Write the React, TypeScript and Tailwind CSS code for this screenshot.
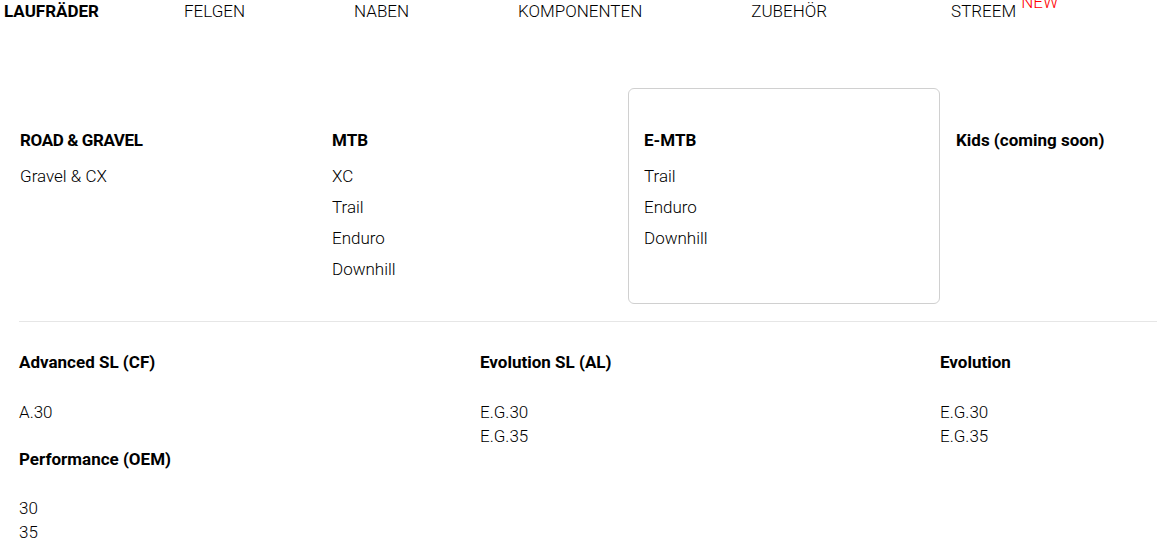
import React from "react";

const nav = [
  { label: "LAUFRÄDER", active: true, ml: "ml-[4px]" },
  { label: "FELGEN", ml: "ml-[85px]" },
  { label: "NABEN", ml: "ml-[109px]" },
  { label: "KOMPONENTEN", ml: "ml-[109px]" },
  { label: "ZUBEHÖR", ml: "ml-[109px]" },
  { label: "STREEM", ml: "ml-[124px]", isNew: true },
];

const cats = [
  { title: "ROAD & GRAVEL", items: ["Gravel & CX"], tight: true },
  { title: "MTB", items: ["XC", "Trail", "Enduro", "Downhill"] },
  { title: "E-MTB", items: ["Trail", "Enduro", "Downhill"], boxed: true },
  { title: "Kids (coming soon)", items: [] },
];

export default function App() {
  return (
    <div className="w-[1157px] h-[555px] bg-white text-black overflow-hidden font-['Roboto',sans-serif]">
      <nav className="flex items-start h-[24px] pt-[1px]">
        {nav.map((n) => (
          <div key={n.label} className={`${n.ml} relative text-[17px] leading-[20px] ${n.active ? "font-bold" : "font-light"}`}>
            {n.label}
            {n.isNew && (
              <span className="absolute left-[calc(100%+5px)] top-[-9px] text-[17px] leading-[20px] font-light text-[#ff0000]">NEW</span>
            )}
          </div>
        ))}
      </nav>
      <div className="grid grid-cols-[312px_312px_312px_312px] ml-[4px] mt-[64px]">
        {cats.map((c) => (
          <div
            key={c.title}
            className={`h-[216px] px-[15px] pt-[41px] rounded-[6px] border ${c.boxed ? "border-[#d0d0d0]" : "border-transparent"}`}
          >
            <div className={`text-[17px] leading-[20px] font-bold ${c.tight ? "tracking-[-0.4px]" : ""}`}>{c.title}</div>
            <div className="mt-[16px] flex flex-col gap-[11px]">
              {c.items.map((i) => (
                <div key={i} className="text-[17px] leading-[20px] font-light">{i}</div>
              ))}
            </div>
          </div>
        ))}
      </div>
      <div className="ml-[19px] mt-[17px] border-t border-[#e6e6e6]" />
      <div className="ml-[19px] grid grid-cols-[461px_460px_1fr] pt-[30px]">
        <div>
          <div className="text-[17px] leading-[20px] font-bold">Advanced SL (CF)</div>
          <div className="mt-[28px] text-[17px] leading-[24px] font-light">A.30</div>
          <div className="mt-[25px] text-[17px] leading-[20px] font-bold">Performance (OEM)</div>
          <div className="mt-[27px] text-[17px] leading-[24px] font-light">30</div>
          <div className="text-[17px] leading-[24px] font-light">35</div>
        </div>
        <div>
          <div className="text-[17px] leading-[20px] font-bold">Evolution SL (AL)</div>
          <div className="mt-[28px] text-[17px] leading-[24px] font-light">E.G.30</div>
          <div className="text-[17px] leading-[24px] font-light">E.G.35</div>
        </div>
        <div>
          <div className="text-[17px] leading-[20px] font-bold">Evolution</div>
          <div className="mt-[28px] text-[17px] leading-[24px] font-light">E.G.30</div>
          <div className="text-[17px] leading-[24px] font-light">E.G.35</div>
        </div>
      </div>
    </div>
  );
}
